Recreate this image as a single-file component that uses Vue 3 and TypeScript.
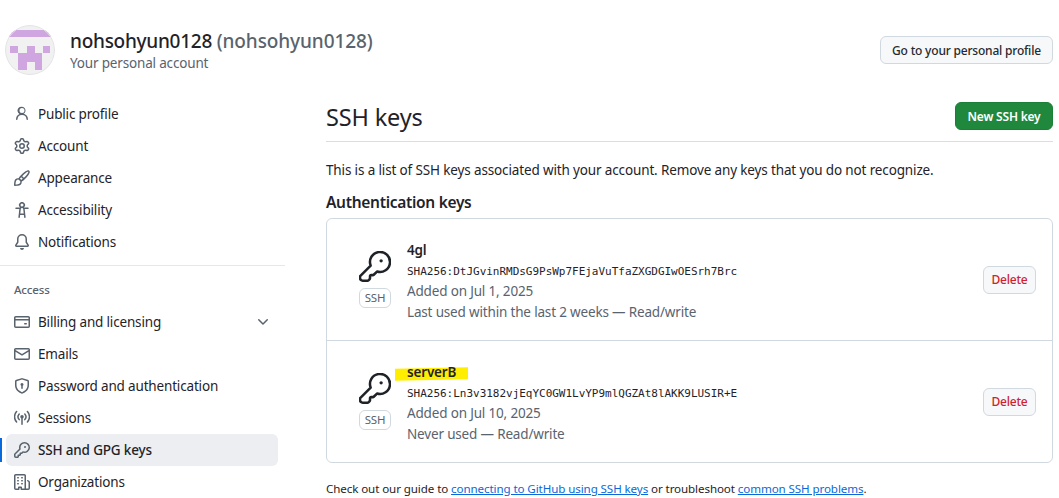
<script setup lang="ts">
// 사이드바 메뉴 아이콘 (octicons 16px)
const icons: Record<string, string> = {
  person: 'M10.561 8.073a6.005 6.005 0 0 1 3.432 5.142.75.75 0 1 1-1.498.07 4.5 4.5 0 0 0-8.99 0 .75.75 0 0 1-1.498-.07 6.004 6.004 0 0 1 3.431-5.142 3.999 3.999 0 1 1 4.123 0ZM10.5 4.5a2.5 2.5 0 1 0-5 0 2.5 2.5 0 0 0 5 0Z',
  gear: 'M8 0a8.2 8.2 0 0 1 .701.031C9.444.095 9.99.645 10.16 1.29l.288 1.107c.018.066.079.158.212.224.231.114.454.243.668.386.123.082.233.09.299.071l1.103-.303c.644-.176 1.392.021 1.82.63.27.385.506.792.704 1.218.315.675.111 1.422-.364 1.891l-.814.806c-.049.048-.098.147-.088.294.016.257.016.515 0 .772-.01.147.038.246.088.294l.814.806c.475.469.679 1.216.364 1.891a7.977 7.977 0 0 1-.704 1.217c-.428.61-1.176.807-1.82.63l-1.102-.302c-.067-.019-.177-.011-.3.071a5.909 5.909 0 0 1-.668.386c-.133.066-.194.158-.211.224l-.29 1.106c-.168.646-.715 1.196-1.458 1.26a8.006 8.006 0 0 1-1.402 0c-.743-.064-1.289-.614-1.458-1.26l-.289-1.106c-.018-.066-.079-.158-.212-.224a5.738 5.738 0 0 1-.668-.386c-.123-.082-.233-.09-.299-.071l-1.103.303c-.644.176-1.392-.021-1.82-.63a8.12 8.12 0 0 1-.704-1.218c-.315-.675-.111-1.422.363-1.891l.815-.806c.05-.048.098-.147.088-.294a6.214 6.214 0 0 1 0-.772c.01-.147-.038-.246-.088-.294l-.815-.806C.635 6.045.431 5.298.746 4.623a7.92 7.92 0 0 1 .704-1.217c.428-.61 1.176-.807 1.82-.63l1.102.302c.067.019.177.011.3-.071.214-.143.437-.272.668-.386.133-.066.194-.158.211-.224l.29-1.106C6.009.645 6.556.095 7.299.03 7.53.01 7.764 0 8 0Zm-.571 1.525c-.036.003-.108.036-.137.146l-.289 1.105c-.147.561-.549.967-.998 1.189-.173.086-.34.183-.5.29-.417.278-.97.423-1.529.27l-1.103-.303c-.109-.03-.175.016-.195.045-.22.312-.412.644-.573.99-.014.031-.021.11.059.19l.815.806c.411.406.562.957.53 1.456a4.709 4.709 0 0 0 0 .582c.032.499-.119 1.05-.53 1.456l-.815.806c-.081.08-.073.159-.059.19.162.346.353.677.573.989.02.03.085.076.195.046l1.102-.303c.56-.153 1.113-.008 1.53.27.161.107.328.204.501.29.447.222.85.629.997 1.189l.289 1.105c.029.109.101.143.137.146a6.6 6.6 0 0 0 1.142 0c.036-.003.108-.036.137-.146l.289-1.105c.147-.561.549-.967.998-1.189.173-.086.34-.183.5-.29.417-.278.97-.423 1.529-.27l1.103.303c.109.029.175-.016.195-.045.22-.313.411-.644.573-.99.014-.031.021-.11-.059-.19l-.815-.806c-.411-.406-.562-.957-.53-1.456a4.709 4.709 0 0 0 0-.582c-.032-.499.119-1.05.53-1.456l.815-.806c.081-.08.073-.159.059-.19a6.464 6.464 0 0 0-.573-.989c-.02-.03-.085-.076-.195-.046l-1.102.303c-.56.153-1.113.008-1.53-.27a4.44 4.44 0 0 0-.501-.29c-.447-.222-.85-.629-.997-1.189l-.289-1.105c-.029-.11-.101-.143-.137-.146a6.6 6.6 0 0 0-1.142 0ZM11 8a3 3 0 1 1-6 0 3 3 0 0 1 6 0ZM9.5 8a1.5 1.5 0 1 0-3.001.001A1.5 1.5 0 0 0 9.5 8Z',
  brush: 'M11.134 1.535c.7-.509 1.416-.942 2.076-1.155.649-.21 1.463-.267 2.069.34.603.601.568 1.411.368 2.07-.202.668-.624 1.39-1.125 2.096-1.011 1.424-2.496 2.987-3.775 4.249-1.098 1.084-2.132 1.839-3.04 2.3a3.744 3.744 0 0 1-1.055 3.217c-.431.431-1.065.691-1.657.861-.614.177-1.294.287-1.914.357A21.151 21.151 0 0 1 .797 16H.743l.007-.75H.749L.742 16a.75.75 0 0 1-.743-.742l.743-.008-.742.007v-.054a21.25 21.25 0 0 1 .13-2.284c.067-.647.187-1.287.358-1.914.17-.591.43-1.226.86-1.657a3.746 3.746 0 0 1 3.227-1.054c.466-.893 1.225-1.907 2.314-2.982 1.271-1.255 2.833-2.75 4.245-3.777ZM1.62 13.089c-.051.464-.086.929-.104 1.395.466-.018.932-.053 1.396-.104a10.511 10.511 0 0 0 1.668-.309c.526-.151.856-.325 1.011-.48a2.25 2.25 0 1 0-3.182-3.182c-.155.155-.329.485-.48 1.01a10.515 10.515 0 0 0-.309 1.67Zm10.396-10.34c-1.224.89-2.605 2.189-3.822 3.384l1.718 1.718c1.21-1.205 2.51-2.597 3.387-3.833.47-.662.78-1.227.912-1.662.134-.444.032-.551.009-.575h-.001V1.78c-.014-.014-.113-.113-.548.027-.432.14-.995.462-1.655.942Zm-4.832 7.266-.001.001a9.859 9.859 0 0 0 1.63-1.142L7.155 7.216a9.7 9.7 0 0 0-1.161 1.607c.482.302.889.71 1.19 1.192Z',
  access: 'M9.923 5.302c.063.063.122.129.178.198H14A.75.75 0 0 1 14 7h-3.3l.578 5.163.362 2.997a.75.75 0 0 1-1.49.18L9.868 13H6.132l-.282 2.34a.75.75 0 0 1-1.49-.18l.362-2.997L5.3 7H2a.75.75 0 0 1 0-1.5h3.9a2.54 2.54 0 0 1 .176-.198 3 3 0 1 1 3.847 0ZM9.2 7.073h-.001a1.206 1.206 0 0 0-2.398 0L6.305 11.5h3.39ZM9.5 3a1.5 1.5 0 1 0-3.001.001A1.5 1.5 0 0 0 9.5 3Z',
  bell: 'M8 16a2 2 0 0 0 1.985-1.75c.017-.137-.097-.25-.235-.25h-3.5c-.138 0-.252.113-.235.25A2 2 0 0 0 8 16ZM3 5a5 5 0 0 1 10 0v2.947c0 .05.015.098.042.139l1.703 2.555A1.519 1.519 0 0 1 13.482 13H2.518a1.516 1.516 0 0 1-1.263-2.36l1.703-2.554A.255.255 0 0 0 3 7.947Zm5-3.5A3.5 3.5 0 0 0 4.5 5v2.947c0 .346-.102.683-.294.97l-1.703 2.556a.017.017 0 0 0-.003.01l.001.006c0 .002.002.004.004.006l.006.004.007.001h10.964l.007-.001.006-.004.004-.006.001-.007a.017.017 0 0 0-.003-.01l-1.703-2.554a1.745 1.745 0 0 1-.294-.97V5A3.5 3.5 0 0 0 8 1.5Z',
  card: 'M10.75 9a.75.75 0 0 0 0 1.5h1.5a.75.75 0 0 0 0-1.5h-1.5ZM0 3.75C0 2.784.784 2 1.75 2h12.5c.966 0 1.75.784 1.75 1.75v8.5A1.75 1.75 0 0 1 14.25 14H1.75A1.75 1.75 0 0 1 0 12.25ZM14.5 6.5h-13v5.75c0 .138.112.25.25.25h12.5a.25.25 0 0 0 .25-.25Zm0-2.75a.25.25 0 0 0-.25-.25H1.75a.25.25 0 0 0-.25.25V5h13Z',
  mail: 'M1.75 2h12.5c.966 0 1.75.784 1.75 1.75v8.5A1.75 1.75 0 0 1 14.25 14H1.75A1.75 1.75 0 0 1 0 12.25v-8.5C0 2.784.784 2 1.75 2ZM1.5 12.251c0 .138.112.25.25.25h12.5a.25.25 0 0 0 .25-.25V5.809L8.38 9.397a.75.75 0 0 1-.76 0L1.5 5.809v6.442Zm13-8.181v-.32a.25.25 0 0 0-.25-.25H1.75a.25.25 0 0 0-.25.25v.32L8 7.88Z',
  shield: 'm8.533.133 5.25 1.68A1.75 1.75 0 0 1 15 3.48V7c0 1.566-.32 3.182-1.303 4.682-.983 1.498-2.585 2.813-5.032 3.855a1.697 1.697 0 0 1-1.33 0c-2.447-1.042-4.049-2.357-5.032-3.855C1.32 10.182 1 8.566 1 7V3.48a1.75 1.75 0 0 1 1.217-1.667l5.25-1.68a1.748 1.748 0 0 1 1.066 0Zm-.61 1.429.001.001-5.25 1.68a.251.251 0 0 0-.174.237V7c0 1.36.275 2.666 1.057 3.859.784 1.194 2.121 2.342 4.366 3.298a.196.196 0 0 0 .154 0c2.245-.957 3.582-2.103 4.366-3.297C13.225 9.666 13.5 8.358 13.5 7V3.48a.25.25 0 0 0-.174-.238l-5.25-1.68a.25.25 0 0 0-.153 0ZM9.5 6.5c0 .536-.286 1.032-.75 1.3v2.45a.75.75 0 0 1-1.5 0V7.8A1.5 1.5 0 1 1 9.5 6.5Z',
  key: 'M10.5 0a5.499 5.499 0 1 1-1.288 10.848l-.932.932a.749.749 0 0 1-.53.22H7v.75a.749.749 0 0 1-.22.53l-.5.5a.749.749 0 0 1-.53.22H5v.75a.749.749 0 0 1-.22.53l-.5.5a.749.749 0 0 1-.53.22h-2A1.75 1.75 0 0 1 0 14.25v-2c0-.199.079-.389.22-.53l4.932-4.932A5.5 5.5 0 0 1 10.5 0Zm-4 5.5c-.001.431.069.86.205 1.269a.75.75 0 0 1-.181.768L1.5 12.56v1.69c0 .138.112.25.25.25h1.69l.06-.06v-1.19a.75.75 0 0 1 .75-.75h1.19l.06-.06v-1.19a.75.75 0 0 1 .75-.75h1.19l1.023-1.025a.75.75 0 0 1 .768-.18A4 4 0 1 0 6.5 5.5ZM11 6a1 1 0 1 1 0-2 1 1 0 0 1 0 2Z',
  org: 'M1.75 16A1.75 1.75 0 0 1 0 14.25V1.75C0 .784.784 0 1.75 0h8.5C11.216 0 12 .784 12 1.75v12.5c0 .085-.006.168-.018.25h2.268a.25.25 0 0 0 .25-.25V8.285a.25.25 0 0 0-.111-.208l-1.055-.703a.749.749 0 1 1 .832-1.248l1.055.703c.487.325.779.871.779 1.456v5.965A1.75 1.75 0 0 1 14.25 16h-3.5a.766.766 0 0 1-.197-.026c-.099.017-.2.026-.303.026h-3a.75.75 0 0 1-.75-.75V14h-1v1.25a.75.75 0 0 1-.75.75Zm-.25-1.75c0 .138.112.25.25.25H4v-1.25a.75.75 0 0 1 .75-.75h2.5a.75.75 0 0 1 .75.75v1.25h2.25a.25.25 0 0 0 .25-.25V1.75a.25.25 0 0 0-.25-.25h-8.5a.25.25 0 0 0-.25.25ZM3.75 6h.5a.75.75 0 0 1 0 1.5h-.5a.75.75 0 0 1 0-1.5ZM3 3.75A.75.75 0 0 1 3.75 3h.5a.75.75 0 0 1 0 1.5h-.5A.75.75 0 0 1 3 3.75Zm4 3A.75.75 0 0 1 7.75 6h.5a.75.75 0 0 1 0 1.5h-.5A.75.75 0 0 1 7 6.75ZM7.75 3h.5a.75.75 0 0 1 0 1.5h-.5a.75.75 0 0 1 0-1.5ZM3 9.75A.75.75 0 0 1 3.75 9h.5a.75.75 0 0 1 0 1.5h-.5A.75.75 0 0 1 3 9.75ZM7.75 9h.5a.75.75 0 0 1 0 1.5h-.5a.75.75 0 0 1 0-1.5Z',
}

const topMenu = [
  { label: 'Public profile', icon: 'person' },
  { label: 'Account', icon: 'gear' },
  { label: 'Appearance', icon: 'brush' },
  { label: 'Accessibility', icon: 'access' },
  { label: 'Notifications', icon: 'bell' },
]

const accessMenu = [
  { label: 'Billing and licensing', icon: 'card', more: true },
  { label: 'Emails', icon: 'mail' },
  { label: 'Password and authentication', icon: 'shield' },
  { label: 'Sessions', icon: 'broadcast' },
  { label: 'SSH and GPG keys', icon: 'key', active: true },
  { label: 'Organizations', icon: 'org' },
]

const sshKeys = [
  {
    name: '4gl',
    hash: 'SHA256:DtJGvinRMDsG9PsWp7FEjaVuTfaZXGDGIwOESrh7Brc',
    added: 'Added on Jul 1, 2025',
    used: 'Last used within the last 2 weeks — Read/write',
  },
  {
    name: 'serverB',
    hash: 'SHA256:Ln3v3182vjEqYC0GW1LvYP9mlQGZAt8lAKK9LUSIR+E',
    added: 'Added on Jul 10, 2025',
    used: 'Never used — Read/write',
    marked: true,
  },
]
</script>

<template>
  <div class="page">
    <header class="top">
      <svg class="avatar" viewBox="0 0 50 50">
        <rect width="50" height="50" fill="#f1f1f1" />
        <path d="M0 5h50v7H0zM5 21h8v7H5zM22 21h8v7h-8zM38 21h7v7h-7zM13 28h24v9H13zM13 37h9v8h-9zM30 37h7v8h-7z" fill="#cfa6e0" />
        <circle cx="25" cy="25" r="24.5" fill="none" stroke="#e3e3e3" />
      </svg>
      <div class="who">
        <div class="who-name">nohsohyun0128 <span>(nohsohyun0128)</span></div>
        <div class="who-sub">Your personal account</div>
      </div>
      <button class="btn profile-btn">Go to your personal profile</button>
    </header>

    <div class="body">
      <aside class="side">
        <ul class="menu">
          <li v-for="m in topMenu" :key="m.label" class="item">
            <svg class="ico" viewBox="0 0 16 16"><path :d="icons[m.icon]" /></svg>
            {{ m.label }}
          </li>
        </ul>
        <div class="side-line"></div>
        <div class="side-title">Access</div>
        <ul class="menu">
          <li v-for="m in accessMenu" :key="m.label" class="item" :class="{ active: m.active }">
            <svg v-if="m.icon === 'broadcast'" class="ico" viewBox="0 0 16 16">
              <path class="wave" d="M2.6 1.6a7.6 7.6 0 0 0 0 10.4M13.4 1.6a7.6 7.6 0 0 1 0 10.4M5.2 4a4.2 4.2 0 0 0 0 5.6M10.8 4a4.2 4.2 0 0 1 0 5.6M8 7v7.2" />
              <circle cx="8" cy="6.8" r="1.75" />
            </svg>
            <svg v-else class="ico" viewBox="0 0 16 16"><path :d="icons[m.icon]" /></svg>
            {{ m.label }}
            <svg v-if="m.more" class="chev" viewBox="0 0 16 16">
              <path d="M12.78 5.22a.749.749 0 0 1 0 1.06l-4.25 4.25a.749.749 0 0 1-1.06 0L3.22 6.28a.749.749 0 1 1 1.06-1.06L8 8.939l3.72-3.719a.749.749 0 0 1 1.06 0Z" />
            </svg>
          </li>
        </ul>
      </aside>

      <main class="main">
        <div class="head">
          <h1>SSH keys</h1>
          <button class="btn new-btn">New SSH key</button>
        </div>
        <p class="intro">This is a list of SSH keys associated with your account. Remove any keys that you do not recognize.</p>
        <h2>Authentication keys</h2>

        <div class="box">
          <div v-for="k in sshKeys" :key="k.name" class="row">
            <div class="key-col">
              <svg class="big-key" viewBox="0 0 24 24">
                <path d="M13.5 15.4 11.05 17.8a1 1 0 0 1-.7.3H9.25a1 1 0 0 0-1 1v1.4a.9.9 0 0 1-.25.6l-.9.9a1 1 0 0 1-.7.3H2.75a2 2 0 0 1-2-2v-1a1 1 0 0 1 .3-.7L8.75 10.95A7.5 7.5 0 1 1 13.5 15.4Z" />
                <circle cx="16.6" cy="7.4" r="1.25" />
              </svg>
              <span class="tag">SSH</span>
            </div>
            <div class="info">
              <div class="key-name" :class="{ marked: k.marked }"><span>{{ k.name }}</span></div>
              <code>{{ k.hash }}</code>
              <div class="meta">{{ k.added }}</div>
              <div class="meta">{{ k.used }}</div>
            </div>
            <button class="btn del-btn">Delete</button>
          </div>
        </div>

        <p class="foot">
          Check out our guide to <a>connecting to GitHub using SSH keys</a> or troubleshoot <a>common SSH problems</a>.
        </p>
      </main>
    </div>
  </div>
</template>

<style>
html, body {
  margin: 0;
  background: #fff;
  overflow: hidden;
}
</style>

<style scoped>
.page {
  height: 498px;
  overflow: hidden;
  font-family: "Noto Sans", sans-serif;
  font-size: 13.5px;
  color: #1f2328;
  letter-spacing: -0.17px;
}

.top {
  display: flex;
  align-items: center;
  padding: 25px 6px 0 5px;
}

.avatar {
  width: 50px;
  height: 50px;
  flex: none;
  border-radius: 50%;
}

.who {
  flex: 1;
  margin-left: 15px;
}

.who-name {
  font-size: 19px;
  font-weight: 500;
  line-height: 26px;
  letter-spacing: -0.27px;
}

.who-name span {
  color: #59636e;
  letter-spacing: -0.1px;
}

.who-sub {
  color: #59636e;
  line-height: 18px;
}

.btn {
  font-family: inherit;
  font-size: 12px;
  font-weight: 500;
  letter-spacing: -0.2px;
  height: 28px;
  border: 1px solid #d1d9e0;
  border-radius: 6px;
  background: #f6f8fa;
  color: #25292e;
  padding: 0;
  white-space: nowrap;
}

.profile-btn {
  width: 173px;
}

.body {
  display: flex;
  gap: 41px;
  padding: 17px 6px 0 0;
}

.side {
  width: 285px;
  flex: none;
  padding-top: 6px;
}

.menu {
  list-style: none;
  margin: 0;
  padding: 0;
}

.item {
  position: relative;
  display: flex;
  align-items: center;
  height: 32px;
  margin: 0 7px 0 6px;
  padding-left: 8px;
  border-radius: 6px;
}

.item.active {
  background: #eceef1;
  font-weight: 500;
}

.item.active::before {
  content: "";
  position: absolute;
  left: -6px;
  top: 4px;
  width: 2px;
  height: 24px;
  background: #0969da;
}

.ico {
  width: 16px;
  height: 16px;
  margin-right: 8px;
  fill: #59636e;
  flex: none;
}

.wave {
  fill: none;
  stroke: #59636e;
  stroke-width: 1.5;
  stroke-linecap: round;
}

.chev {
  width: 16px;
  height: 16px;
  margin-left: auto;
  margin-right: 7px;
  fill: #59636e;
}

.side-line {
  height: 1px;
  background: #e4e7eb;
  margin: 7px 0 0;
}

.side-title {
  font-size: 11.5px;
  font-weight: 500;
  color: #59636e;
  padding: 16px 0 8px 14px;
  line-height: 16px;
}

.main {
  flex: 1;
  min-width: 0;
}

.head {
  display: flex;
  align-items: flex-start;
  justify-content: space-between;
  height: 39px;
  padding-top: 10px;
  border-bottom: 1px solid #d8dee4;
}

h1 {
  font-size: 23.5px;
  font-weight: 400;
  line-height: 30px;
  margin: 0;
}

.new-btn {
  width: 98px;
  background: #1f883d;
  border-color: #1a7f37;
  color: #fff;
  font-weight: 600;
}

.intro {
  margin: 18px 0 0;
  line-height: 21px;
  letter-spacing: -0.14px;
}

h2 {
  font-size: 15.5px;
  font-weight: 600;
  letter-spacing: -0.3px;
  margin: 11px 0 5px;
  line-height: 21px;
}

.box {
  border: 1px solid #d1d9e0;
  border-radius: 6px;
}

.row {
  display: flex;
  align-items: center;
  height: 121px;
  padding: 0 16px 0 32px;
}

.row + .row {
  border-top: 1px solid #d1d9e0;
}

.key-col {
  display: flex;
  flex-direction: column;
  align-items: center;
  width: 32px;
  margin-right: 16px;
}

.big-key {
  width: 32px;
  height: 32px;
  fill: none;
  stroke: #1f2328;
  stroke-width: 1.9;
  stroke-linejoin: round;
}

.big-key circle {
  fill: #1f2328;
  stroke: none;
}

.tag {
  box-sizing: border-box;
  width: 32px;
  text-align: center;
  margin-top: 5px;
  font-size: 11.5px;
  line-height: 18px;
  border: 1px solid #d1d9e0;
  border-radius: 6px;
  color: #59636e;
}

.info {
  flex: 1;
  padding-top: 1px;
}

.key-name {
  font-weight: 600;
  line-height: 24px;
}

.key-name span {
  position: relative;
  z-index: 0;
}

.marked span::before {
  content: "";
  position: absolute;
  z-index: -1;
  left: -12px;
  right: -12px;
  top: 5px;
  height: 12px;
  background: #ffee00;
  transform: skewY(-1deg);
}

code {
  display: block;
  font-family: "DejaVu Sans Mono", monospace;
  font-size: 11px;
  letter-spacing: -0.02px;
  line-height: 19px;
}

.meta {
  color: #59636e;
  line-height: 21px;
}

.del-btn {
  width: 53px;
  color: #cf222e;
}

.foot {
  margin: 18px 0 0;
  font-size: 11.6px;
  letter-spacing: -0.1px;
}

.foot a {
  color: #0969da;
  text-decoration: underline;
}
</style>
